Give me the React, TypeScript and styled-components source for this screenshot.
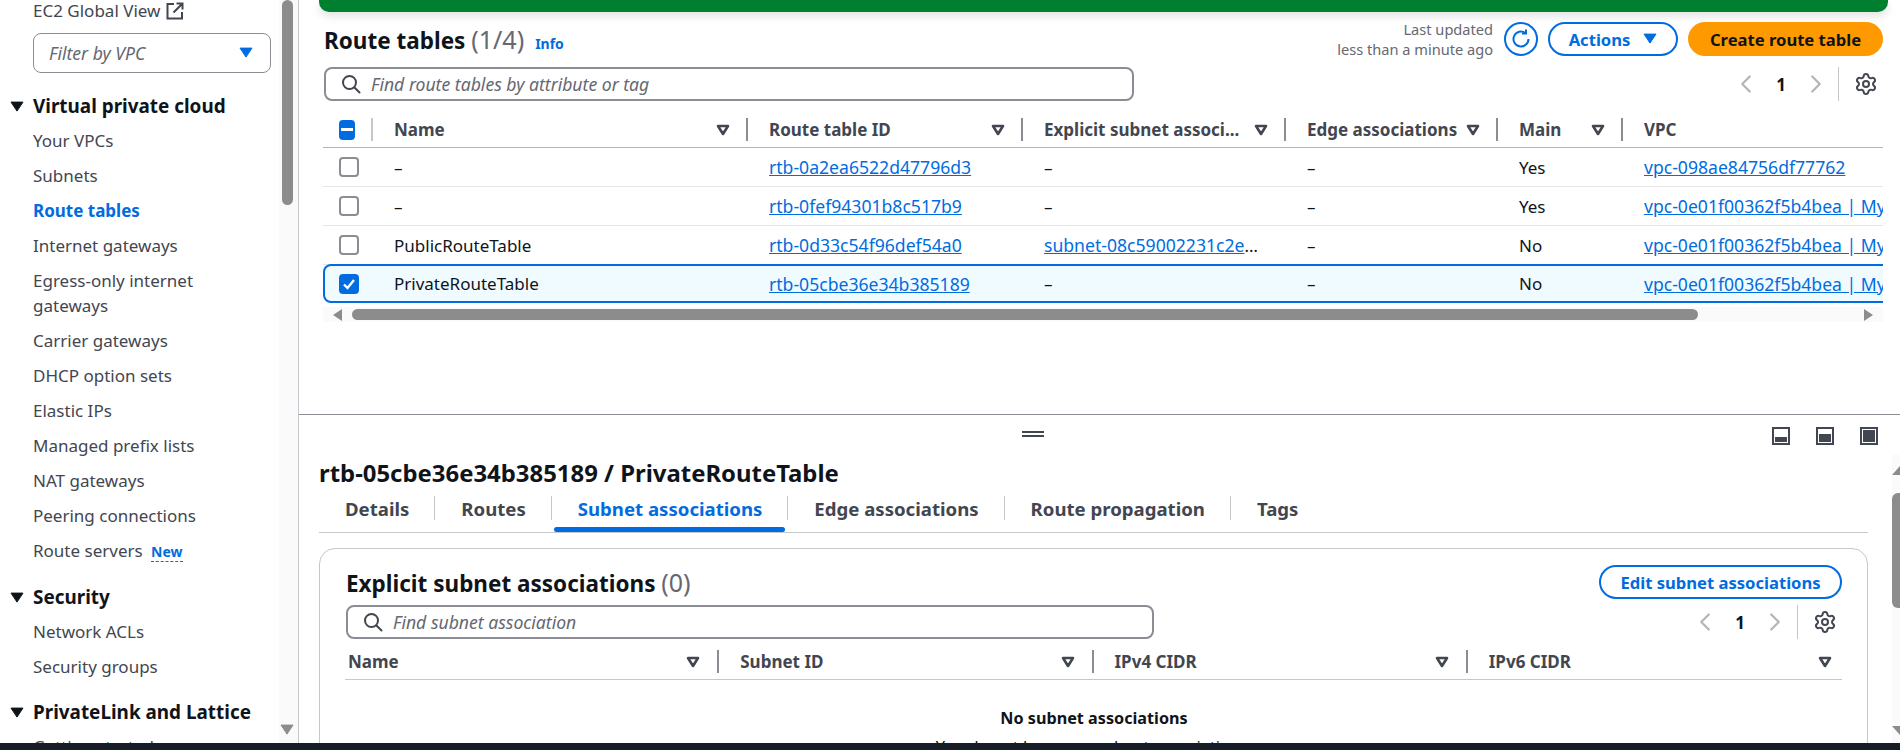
import React from "react"
import styled, { createGlobalStyle } from "styled-components"
import { Settings, ChevronLeft, ChevronRight } from "lucide-react"

const GlobalStyle = createGlobalStyle`
    html, body {
        margin: 0;
        padding: 0;
        height: 750px;
        overflow: hidden;
        background: #fff;
    }
    body, input, button {
        font-family: "Noto Sans", "Open Sans", sans-serif;
    }
    * {
        box-sizing: border-box;
    }
`

const SortIcon = () => (
    <svg width="14" height="12" viewBox="0 0 14 12">
        <path d="M2 2h10L7 10z" fill="none" stroke="#424650" strokeWidth="2.6" strokeLinejoin="round" />
    </svg>
)

const Caret = ({ color, size = 14 }: { color: string, size?: number }) => (
    <svg width={size} height={size * 0.8} viewBox="0 0 14 11">
        <path d="M1 1h12L7 10z" fill={color} stroke={color} strokeWidth="1" strokeLinejoin="round" />
    </svg>
)

const SearchIcon = () => (
    <svg width="20" height="20" viewBox="0 0 20 20" fill="none" stroke="#424650" strokeWidth="2">
        <circle cx="8.5" cy="8.5" r="6.5" />
        <path d="M13.5 13.5L18.5 18.5" strokeLinecap="round" />
    </svg>
)

const ExternalIcon = () => (
    <svg width="18" height="18" viewBox="0 0 18 18" fill="none" stroke="#424650" strokeWidth="2">
        <path d="M8 2H1.5v14.5H16V10" />
        <path d="M7.5 10.5L16 2M10.5 1.5H16.5V7.5" />
    </svg>
)

const RefreshIcon = () => (
    <svg width="20" height="20" viewBox="0 0 20 20" fill="none" stroke="#006ce0" strokeWidth="2">
        <path d="M17.5 10a7.5 7.5 0 1 1-3-6" />
        <path d="M15 0.5V4.5H11" />
    </svg>
)

const PanelIcon = ({ fill }: { fill: number }) => (
    <svg width="18" height="18" viewBox="0 0 18 18">
        <rect x="1" y="1" width="16" height="16" fill="none" stroke="#424650" strokeWidth="2" />
        <rect x="3" y={15 - fill} width="12" height={fill} fill="#424650" />
    </svg>
)

const Pagination = () => (
    <PagerRow>
        <ChevronLeft size={30} color="#b4b4bb" strokeWidth={1.8} />
        <PageNumber>1</PageNumber>
        <ChevronRight size={30} color="#b4b4bb" strokeWidth={1.8} />
        <PagerDivider />
        <Settings size={24} color="#424650" strokeWidth={2} />
    </PagerRow>
)

const vpcMain = "vpc-0e01f00362f5b4bea | MyVPC"

const routeRows = [
    { name: "–", id: "rtb-0a2ea6522d47796d3", subnet: "", main: "Yes", vpc: "vpc-098ae84756df77762" },
    { name: "–", id: "rtb-0fef94301b8c517b9", subnet: "", main: "Yes", vpc: vpcMain },
    { name: "PublicRouteTable", id: "rtb-0d33c54f96def54a0", subnet: "subnet-08c59002231c2e4f1", main: "No", vpc: vpcMain },
    { name: "PrivateRouteTable", id: "rtb-05cbe36e34b385189", subnet: "", main: "No", vpc: vpcMain, selected: true },
]

const routeHeaders = ["Route table ID", "Explicit subnet associ...", "Edge associations", "Main"]

const tabs = ["Details", "Routes", "Subnet associations", "Edge associations", "Route propagation", "Tags"]

const subnetHeaders = ["Name", "Subnet ID", "IPv4 CIDR", "IPv6 CIDR"]

const App: React.FC = () => {
    return (
        <Page>
            <GlobalStyle />
            <Body>
                <Sidebar>
                    <Nav>
                        <GlobalLink>EC2 Global View <ExternalIcon /></GlobalLink>
                        <FilterBox>
                            <em>Filter by VPC</em>
                            <Caret color="#006ce0" />
                        </FilterBox>
                        <SectionTitle><Caret color="#0f141a" />Virtual private cloud</SectionTitle>
                        <NavItem>Your VPCs</NavItem>
                        <NavItem>Subnets</NavItem>
                        <NavItem $active>Route tables</NavItem>
                        <NavItem>Internet gateways</NavItem>
                        <NavItem>Egress-only internet gateways</NavItem>
                        <NavItem>Carrier gateways</NavItem>
                        <NavItem>DHCP option sets</NavItem>
                        <NavItem>Elastic IPs</NavItem>
                        <NavItem>Managed prefix lists</NavItem>
                        <NavItem>NAT gateways</NavItem>
                        <NavItem>Peering connections</NavItem>
                        <NavItem>Route servers <NewTag>New</NewTag></NavItem>
                        <SectionTitle><Caret color="#0f141a" />Security</SectionTitle>
                        <NavItem>Network ACLs</NavItem>
                        <NavItem>Security groups</NavItem>
                        <SectionTitle><Caret color="#0f141a" />PrivateLink and Lattice</SectionTitle>
                        <NavItem>Getting started</NavItem>
                    </Nav>
                    <NavScroll>
                        <NavThumb />
                        <Caret color="#8c8c8c" />
                    </NavScroll>
                </Sidebar>
                <Main>
                    <TopPane>
                        <GreenBar />
                        <HeaderRow>
                            <Title>Route tables <Count>(1/4)</Count><InfoLink>Info</InfoLink></Title>
                            <Actions>
                                <Updated>Last updated<br />less than a minute ago</Updated>
                                <RoundButton><RefreshIcon /></RoundButton>
                                <OutlineButton $width={130}>Actions <Caret color="#006ce0" /></OutlineButton>
                                <PrimaryButton>Create route table</PrimaryButton>
                            </Actions>
                        </HeaderRow>
                        <SearchRow>
                            <SearchBox $width={810}>
                                <SearchIcon />
                                <em>Find route tables by attribute or tag</em>
                            </SearchBox>
                            <Pagination />
                        </SearchRow>
                        <RouteTable>
                            <RouteHead>
                                <HeadCell $pad={16} $soft>
                                    <CheckBox $state="mixed"><Dash /></CheckBox>
                                </HeadCell>
                                <HeadCell $pad={21}>Name<SortIcon /></HeadCell>
                                {routeHeaders.map(h => (
                                    <HeadCell $pad={21} key={h}>{h}<SortIcon /></HeadCell>
                                ))}
                                <HeadCell $pad={21} $last>VPC</HeadCell>
                            </RouteHead>
                            {routeRows.map(row => (
                                <RouteRow key={row.id} $selected={row.selected}>
                                    <BodyCell $pad={16}>
                                        {row.selected
                                            ? <CheckBox $state="on">
                                                <svg width="14" height="14" viewBox="0 0 14 14" fill="none" stroke="#fff" strokeWidth="2.4"><path d="M2 7.5l3.5 3.5L12 3" /></svg>
                                            </CheckBox>
                                            : <CheckBox $state="off" />}
                                    </BodyCell>
                                    <BodyCell $pad={21}>{row.name}</BodyCell>
                                    <BodyCell $pad={21}><Link>{row.id}</Link></BodyCell>
                                    <BodyCell $pad={21}>
                                        {row.subnet ? <Truncated><Link>{row.subnet}</Link></Truncated> : "–"}
                                    </BodyCell>
                                    <BodyCell $pad={21}>–</BodyCell>
                                    <BodyCell $pad={21}>{row.main}</BodyCell>
                                    <BodyCell $pad={21}><Link>{row.vpc}</Link></BodyCell>
                                </RouteRow>
                            ))}
                        </RouteTable>
                        <HScroll>
                            <ArrowLeft />
                            <HThumb />
                            <ArrowRight />
                        </HScroll>
                    </TopPane>
                    <LowerPane>
                        <DragHandle />
                        <PanelControls>
                            <PanelIcon fill={5} />
                            <PanelIcon fill={8} />
                            <PanelIcon fill={12} />
                        </PanelControls>
                        <DetailTitle>rtb-05cbe36e34b385189 / PrivateRouteTable</DetailTitle>
                        <TabBar>
                            {tabs.map(tab => (
                                <Tab key={tab} $active={tab === "Subnet associations"}>{tab}</Tab>
                            ))}
                        </TabBar>
                        <Card>
                            <CardHeader>
                                <CardTitle>Explicit subnet associations <Count>(0)</Count></CardTitle>
                                <OutlineButton $width={243}>Edit subnet associations</OutlineButton>
                            </CardHeader>
                            <CardSearchRow>
                                <SearchBox $width={808}>
                                    <SearchIcon />
                                    <em>Find subnet association</em>
                                </SearchBox>
                                <Pagination />
                            </CardSearchRow>
                            <SubnetHead>
                                {subnetHeaders.map((h, i) => (
                                    <SubnetCell key={h} $first={i === 0} $last={i === 3}>{h}<SortIcon /></SubnetCell>
                                ))}
                            </SubnetHead>
                            <EmptyState>
                                <strong>No subnet associations</strong>
                                <span>You do not have any subnet associations.</span>
                            </EmptyState>
                        </Card>
                        <PaneScroll>
                            <PaneArrow $up />
                            <PaneThumb />
                            <PaneArrow />
                        </PaneScroll>
                    </LowerPane>
                </Main>
            </Body>
            <BottomBar />
        </Page>
    )
}

export default App

const Page = styled.div`
    width: 1900px;
    height: 750px;
    display: flex;
    flex-direction: column;
    overflow: hidden;
    color: #0f141a;
    font-size: 17px;

    em {
        font-size: 17.6px;
    }
`

const Body = styled.div`
    flex: 1;
    min-height: 0;
    display: flex;
`

const BottomBar = styled.div`
    height: 7px;
    background: #161d26;
`

const Sidebar = styled.aside`
    width: 299px;
    flex-shrink: 0;
    display: flex;
    border-right: 1px solid #c6c6cd;
    overflow: hidden;
`

const Nav = styled.nav`
    width: 279px;
    flex-shrink: 0;
    padding-left: 33px;
    color: #424650;
`

const NavScroll = styled.div`
    flex: 1;
    display: flex;
    flex-direction: column;
    justify-content: space-between;
    align-items: center;
    background: #fafafa;
    padding: 0 3px 8px 0;
`

const NavThumb = styled.div`
    width: 11px;
    height: 205px;
    border-radius: 6px;
    background: #8c8c8c;
`

const GlobalLink = styled.div`
    height: 21px;
    display: flex;
    align-items: center;
    gap: 6px;
`

const FilterBox = styled.div`
    width: 238px;
    height: 40px;
    margin-top: 12px;
    padding: 0 17px 0 15px;
    display: flex;
    align-items: center;
    justify-content: space-between;
    border: 1px solid #8c8c94;
    border-radius: 8px;
    color: #656871;
`

const SectionTitle = styled.div`
    position: relative;
    height: 22px;
    margin: 22px 0 11px;
    line-height: 22px;
    font-size: 18.9px;
    font-weight: 700;
    color: #0f141a;

    svg {
        position: absolute;
        left: -23px;
        top: 6px;
    }
`

const NavItem = styled.div<{ $active?: boolean }>`
    margin-bottom: 10px;
    line-height: 25px;
    width: 205px;
    font-weight: ${props => props.$active ? 700 : 400};
    color: ${props => props.$active ? "#006ce0" : "#424650"};
`

const NewTag = styled.span`
    margin-left: 4px;
    font-size: 14px;
    font-weight: 700;
    color: #006ce0;
    border-bottom: 1px dashed #006ce0;
`

const Main = styled.main`
    flex: 1;
    min-width: 0;
    display: flex;
    flex-direction: column;
`

const TopPane = styled.section`
    height: 415px;
    flex-shrink: 0;
    padding: 0 17px 0 24px;
    border-bottom: 1px solid #8c8c94;
`

const GreenBar = styled.div`
    height: 12px;
    margin: 0 -5px 0 -4px;
    background: #00802f;
    border-radius: 0 0 10px 10px;
    box-shadow: 0 4px 10px rgba(0, 0, 0, 0.12);
`

const HeaderRow = styled.div`
    display: flex;
    justify-content: space-between;
    align-items: center;
    height: 34px;
    margin-top: 10px;
`

const Title = styled.h1`
    margin: 0 0 0 1px;
    font-size: 22.5px;
    font-weight: 700;
`

const Count = styled.span`
    font-size: 25px;
    font-weight: 400;
    color: #656871;
`

const InfoLink = styled.a`
    margin-left: 11px;
    font-size: 14px;
    font-weight: 700;
    color: #006ce0;
`

const Actions = styled.div`
    display: flex;
    align-items: center;
    gap: 10px;
`

const Updated = styled.div`
    margin-right: 1px;
    text-align: right;
    font-size: 14.6px;
    line-height: 20px;
    color: #656871;
`

const RoundButton = styled.button`
    width: 34px;
    height: 34px;
    padding: 0;
    display: flex;
    align-items: center;
    justify-content: center;
    background: #fff;
    border: 2px solid #006ce0;
    border-radius: 50%;
`

const OutlineButton = styled.button<{ $width: number }>`
    width: ${props => props.$width}px;
    height: 34px;
    padding: 0;
    display: flex;
    align-items: center;
    justify-content: center;
    gap: 13px;
    font-size: 16.6px;
    font-weight: 700;
    color: #006ce0;
    background: #fff;
    border: 2px solid #006ce0;
    border-radius: 20px;
`

const PrimaryButton = styled.button`
    width: 195px;
    height: 34px;
    padding: 0;
    font-size: 16.6px;
    font-weight: 700;
    color: #0f141a;
    background: #ff9900;
    border: none;
    border-radius: 20px;
`

const SearchRow = styled.div`
    display: flex;
    justify-content: space-between;
    align-items: center;
    height: 34px;
    margin-top: 11px;
    padding: 0 5px 0 1px;
`

const SearchBox = styled.div<{ $width: number }>`
    width: ${props => props.$width}px;
    height: 34px;
    padding-left: 15px;
    display: flex;
    align-items: center;
    gap: 10px;
    border: 2px solid #8c8c94;
    border-radius: 8px;
    color: #656871;
`

const PagerRow = styled.div`
    display: flex;
    align-items: center;
    height: 34px;
`

const PageNumber = styled.span`
    width: 40px;
    text-align: center;
    font-weight: 700;
`

const PagerDivider = styled.div`
    width: 1px;
    height: 34px;
    margin: 0 15px 0 7px;
    background: #c6c6cd;
`

const RouteTable = styled.div`
    margin-top: 17px;
    overflow: hidden;
`

const routeColumns = "50px 375px 275px 263px 212px 125px minmax(0, 1fr)"

const RouteHead = styled.div`
    display: grid;
    grid-template-columns: ${routeColumns};
    height: 30px;
    border-bottom: 1px solid #b4b4bb;
    align-items: start;
`

const HeadCell = styled.div<{ $pad: number, $last?: boolean, $soft?: boolean }>`
    height: 23px;
    padding: 0 16px 0 ${props => props.$pad}px;
    display: flex;
    align-items: center;
    justify-content: space-between;
    font-weight: 700;
    color: #424650;
    white-space: nowrap;
    border-right: ${props => props.$last ? "none" : `2px solid ${props.$soft ? "#c6c6cd" : "#8c8c94"}`};
`

const RouteRow = styled.div<{ $selected?: boolean }>`
    display: grid;
    grid-template-columns: ${routeColumns};
    height: 39px;
    align-items: center;
    border-bottom: ${props => props.$selected ? "none" : "1px solid #e6e6e8"};
    ${props => props.$selected && `
        margin-top: -1px;
        width: 1570px;
        background: #f0fbff;
        box-shadow: inset 0 0 0 2px #006ce0;
        border-radius: 8px;
    `}
`

const BodyCell = styled.div<{ $pad: number }>`
    padding-left: ${props => props.$pad}px;
    white-space: nowrap;
`

const Truncated = styled.div`
    width: 218px;
    overflow: hidden;
    text-overflow: ellipsis;
`

const Link = styled.a`
    font-size: 17.6px;
    color: #006ce0;
    text-decoration: underline;
`

const CheckBox = styled.span<{ $state: "off" | "on" | "mixed" }>`
    width: 20px;
    height: 20px;
    display: flex;
    align-items: center;
    justify-content: center;
    border-radius: 4px;
    background: ${props => props.$state === "off" ? "#fff" : "#006ce0"};
    border: 2px solid ${props => props.$state === "off" ? "#8c8c94" : "#006ce0"};
`

const Dash = styled.span`
    width: 12px;
    height: 2.5px;
    background: #fff;
`

const HScroll = styled.div`
    height: 15px;
    margin-top: 4px;
    padding: 0 10px;
    display: flex;
    align-items: center;
    background: #fafafa;
`

const ArrowLeft = styled.span`
    width: 0;
    height: 0;
    border-style: solid;
    border-width: 6px 9px 6px 0;
    border-color: transparent #8c8c8c transparent transparent;
`

const ArrowRight = styled.span`
    width: 0;
    height: 0;
    margin-left: auto;
    border-style: solid;
    border-width: 6px 0 6px 9px;
    border-color: transparent transparent transparent #8c8c8c;
`

const HThumb = styled.div`
    width: 1346px;
    height: 11px;
    margin-left: 10px;
    border-radius: 6px;
    background: #8c8c8c;
`

const LowerPane = styled.section`
    position: relative;
    flex: 1;
    min-height: 0;
    padding: 12px 32px 0 20px;
    overflow: hidden;
`

const DragHandle = styled.div`
    position: absolute;
    left: 723px;
    top: 16px;
    width: 22px;
    height: 6px;
    border-top: 2px solid #424650;
    border-bottom: 2px solid #424650;
`

const PanelControls = styled.div`
    display: flex;
    justify-content: flex-end;
    gap: 26px;
    height: 18px;
    margin-right: -10px;
`

const DetailTitle = styled.h2`
    margin: 13px 0 0;
    font-size: 23.9px;
    line-height: 30px;
    font-weight: 700;
`

const TabBar = styled.div`
    display: flex;
    height: 45px;
    padding-top: 6px;
    border-bottom: 1px solid #c6c6cd;
`

const Tab = styled.div<{ $active?: boolean }>`
    position: relative;
    height: 24px;
    margin-top: 2px;
    padding: 0 25px 0 26px;
    display: flex;
    align-items: center;
    font-size: 18.6px;
    font-weight: 700;
    color: ${props => props.$active ? "#006ce0" : "#424650"};
    border-right: 1px solid #c6c6cd;

    &:last-child {
        border-right: none;
    }

    ${props => props.$active && `
        &::after {
            content: "";
            position: absolute;
            left: 2px;
            right: 2px;
            bottom: -12px;
            height: 5px;
            border-radius: 3px;
            background: #006ce0;
        }
    `}
`

const Card = styled.div`
    margin-top: 15px;
    padding: 16px 25px 0 26px;
    height: 260px;
    border: 1px solid #c6c6cd;
    border-radius: 16px;
`

const CardHeader = styled.div`
    display: flex;
    justify-content: space-between;
    align-items: center;
    height: 34px;
`

const CardTitle = styled.h2`
    margin: 0;
    font-size: 22.5px;
    font-weight: 700;
`

const CardSearchRow = styled(SearchRow)`
    margin-top: 6px;
    padding-left: 0;
`

const SubnetHead = styled.div`
    display: grid;
    grid-template-columns: repeat(4, 1fr);
    height: 30px;
    margin: 11px 0 0 -1px;
    border-bottom: 1px solid #c6c6cd;
    align-items: start;
`

const SubnetCell = styled.div<{ $first?: boolean, $last?: boolean }>`
    height: 23px;
    padding: 0 ${props => props.$last ? "10px" : "17px"} 0 ${props => props.$first ? "3px" : "21px"};
    display: flex;
    align-items: center;
    justify-content: space-between;
    font-weight: 700;
    color: #424650;
    border-right: ${props => props.$last ? "none" : "2px solid #8c8c94"};
`

const EmptyState = styled.div`
    display: flex;
    flex-direction: column;
    align-items: center;
    gap: 6px;
    padding-top: 27px;

    strong {
        font-size: 16.2px;
        font-weight: 700;
    }

    span {
        font-size: 16.4px;
    }
`

const PaneScroll = styled.div`
    position: absolute;
    top: 40px;
    right: 0;
    bottom: 0;
    width: 8px;
    display: flex;
    flex-direction: column;
    justify-content: space-between;
    background: #fafafa;
`

const PaneThumb = styled.div`
    height: 115px;
    margin-top: -100px;
    border-radius: 6px 0 0 6px;
    background: #8c8c8c;
`

const PaneArrow = styled.div<{ $up?: boolean }>`
    width: 0;
    height: 0;
    margin-top: ${props => props.$up ? "11px" : "0"};
    margin-bottom: ${props => props.$up ? "0" : "8px"};
    border-style: solid;
    border-width: ${props => props.$up ? "0 8px 9px 8px" : "9px 8px 0 8px"};
    border-color: ${props => props.$up
        ? "transparent transparent #8c8c8c transparent"
        : "#8c8c8c transparent transparent transparent"};
`
